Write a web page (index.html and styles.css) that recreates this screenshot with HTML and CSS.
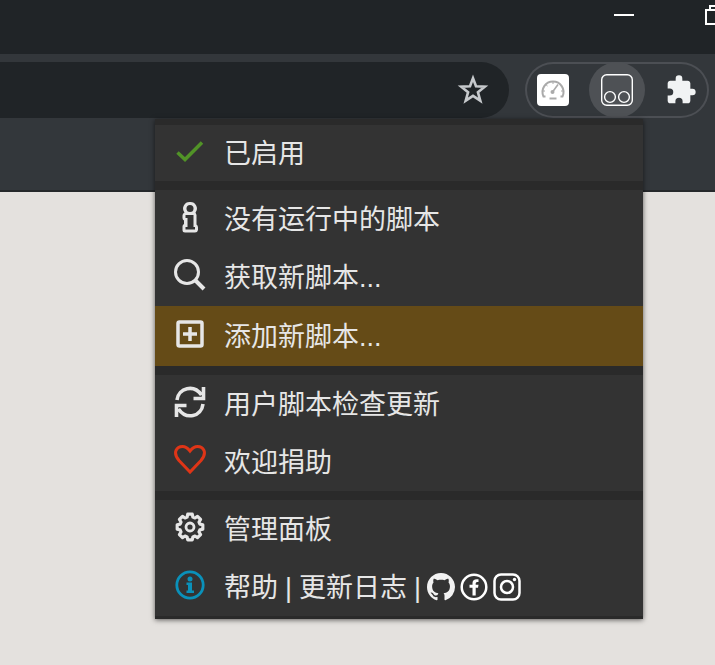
FILE: index.html
```html
<!DOCTYPE html>
<html lang="zh-CN">
<head>
<meta charset="utf-8">
<title>扩展菜单</title>
<link rel="stylesheet" href="styles.css">
</head>
<body>
<header class="browser">
  <div class="titlebar">
    <button class="window-button" aria-label="最小化"><svg width="20" height="20" viewBox="0 0 20 20"><path d="M0 10H20" stroke="#fff" stroke-width="2"/></svg></button>
    <button class="window-button" aria-label="还原"><svg width="20" height="20" viewBox="0 0 20 20" fill="none" stroke="#fff" stroke-width="2"><path d="M1 5H15V19H1ZM5 5V1H19V15H15"/></svg></button>
  </div>
  <div class="toolbar">
    <div class="address">
      <button class="tool" aria-label="收藏"><svg width="32" height="32" viewBox="0 0 32 32"><path d="M16 4.200L19 12.300L27.800 12.700L20.900 18.200L23.300 26.700L16 21.900L8.700 26.700L11.100 18.200L4.200 12.700L13 12.300Z" fill="none" stroke="#c6c9cc" stroke-width="2.600"/></svg></button>
    </div>
    <div class="extensions">
      <button class="tool" aria-label="测速"><svg width="32" height="32" viewBox="0 0 32 32"><rect width="32" height="32" rx="4" fill="#fff"/><g fill="none" stroke="#aaa" stroke-width="2"><path d="M8.500 22.500H6.500A10.500 10.500 0 1 1 25.500 22.500H23.500"/><path d="M16 7V10M8.800 10.500L10.500 12M6 17H8M24 17H26" stroke-width="1"/><path d="M15.500 18L21 10.500" stroke-width="1.600"/><path d="M12.500 24.500H19.500"/></g><circle cx="15.500" cy="18" r="2" fill="#aaa"/></svg></button>
      <button class="tool tool-active" aria-label="脚本管理器"><svg width="32" height="32" viewBox="0 0 32 32" fill="none" stroke="#fff" stroke-width="1.400"><rect x=".7" y=".7" width="30.600" height="30.600" rx="5"/><circle cx="9" cy="23" r="5.400"/><circle cx="23" cy="23" r="5.400"/></svg></button>
      <button class="tool" aria-label="扩展程序"><svg width="32" height="32" viewBox="0 0 24 24" fill="#f1f3f4"><path d="M20.500 11H19V7c0-1.100-.9-2-2-2h-4V3.500a2.500 2.500 0 0 0-5 0V5H4c-1.100 0-2 .9-2 2v3.800h1.500a2.700 2.700 0 0 1 0 5.400H2V20c0 1.100.9 2 2 2h3.800v-1.500a2.700 2.700 0 0 1 5.400 0V22H17c1.100 0 2-.9 2-2v-4h1.500a2.500 2.500 0 0 0 0-5z"/></svg></button>
    </div>
  </div>
  <div class="bookmarks"></div>
</header>
<nav class="popup" aria-label="脚本菜单">
  <section class="group group-short">
    <button class="item"><svg class="icon" viewBox="0 0 32 32"><path d="M3.500 17.500L11 24.500L28 7.500" fill="none" stroke="#519327" stroke-width="3.500"/></svg>已启用</button>
  </section>
  <section class="group">
    <button class="item"><svg class="icon" viewBox="0 0 32 32"><path d="M16 1A6.500 6.500 0 0 1 21.500 11.500L22.500 14V23.500Q24 24.500 24 26.500V29Q23.500 31.500 21 31.500H11Q8.500 31.500 8.500 29V25.500Q8.500 23.500 10 23V19.500Q8.500 18.500 8.500 17V14.500Q8.500 12.500 10.500 11.500A6.500 6.500 0 0 1 16 1Z" fill="#e6e6e6"/><g fill="#333"><circle cx="16" cy="7.500" r="3.500"/><path d="M11.500 14H19.500V26H21V28.500H11.500V26H13.500V17H11.500Z"/></g></svg>没有运行中的脚本</button>
    <button class="item"><svg class="icon" viewBox="0 0 32 32" fill="none" stroke="#e6e6e6"><circle cx="13" cy="13" r="11.500" stroke-width="3"/><path d="M21.500 21.500L30 30" stroke-width="4"/></svg>获取新脚本...</button>
    <button class="item item-active"><svg class="icon" viewBox="0 0 32 32" fill="none" stroke="#e6e6e6"><rect x="4" y="4" width="24" height="24" rx="1.500" stroke-width="3.500"/><path d="M9 16H23M16 9V23" stroke-width="3.500"/></svg>添加新脚本...</button>
  </section>
  <section class="group">
    <button class="item"><svg class="icon" viewBox="0 0 32 32" fill="none" stroke="#e6e6e6" stroke-width="3.600"><path d="M3 14C4.500 1.500 20-2 27.500 9M29.500 1V12.500H19.500M29 18C27.500 31 12 34 4.500 23M2.500 31V19.500H12.500"/></svg>用户脚本检查更新</button>
    <button class="item"><svg class="icon" viewBox="0 0 32 32"><path d="M16 28L5 16.500C-2 8 3 2.500 8.500 2.500C12 2.500 14 4.500 16 7C18 4.500 20 2.500 23.500 2.500C29 2.500 34 8 27 16.500Z" fill="none" stroke="#df3517" stroke-width="3"/></svg>欢迎捐助</button>
  </section>
  <section class="group">
    <button class="item"><svg class="icon" viewBox="0 0 32 32" fill="none" stroke="#e6e6e6" stroke-width="3.200" stroke-linejoin="round"><path d="M18.300 3.200L18.900 6.100L21 7L23.500 5.400L26.600 8.500L25 11L25.900 13.100L28.800 13.700V18.300L25.900 18.900L25 21L26.600 23.500L23.500 26.600L21 25L18.900 25.900L18.300 28.800H13.700L13.100 25.900L11 25L8.500 26.600L5.400 23.500L7 21L6.100 18.900L3.200 18.300V13.700L6.100 13.100L7 11L5.400 8.500L8.500 5.400L11 7L13.100 6.100L13.700 3.200Z"/><circle cx="16" cy="16" r="4" stroke-width="2.800"/></svg>管理面板</button>
    <div class="item">
      <svg class="icon" viewBox="0 0 32 32" fill="#0a91ba"><circle cx="16" cy="16" r="13.200" fill="none" stroke="#0a91ba" stroke-width="2.800"/><circle cx="16" cy="10" r="2.500"/><path d="M12.500 13.500H18V21.500H20V24H12.500V21.500H14V16H12.500Z"/></svg>
      <a class="link" href="#help">帮助</a><span class="bar">|</span><a class="link" href="#changes">更新日志</a><span class="bar">|</span>
      <span class="social">
        <a class="link" href="#github" aria-label="GitHub"><svg width="28" height="28" viewBox="0 0 16 16" fill="#f2f2f2"><path d="M8 0C3.580 0 0 3.580 0 8c0 3.540 2.290 6.530 5.470 7.590.4.070.550-.17.550-.38 0-.19-.01-.82-.01-1.490-2.010.370-2.530-.49-2.690-.94-.09-.23-.48-.94-.82-1.130-.28-.15-.68-.52-.01-.53.630-.01 1.080.580 1.230.820.720 1.210 1.870.87 2.330.660.070-.52.280-.87.510-1.070-1.780-.2-3.640-.89-3.640-3.950 0-.87.310-1.590.820-2.150-.08-.2-.36-1.020.080-2.120 0 0 .67-.21 2.200.82.640-.18 1.320-.27 2-.27s1.360.09 2 .27c1.530-1.040 2.200-.82 2.200-.82.440 1.100.160 1.920.080 2.120.510.560.820 1.270.820 2.150 0 3.070-1.870 3.750-3.650 3.950.290.250.540.730.540 1.480 0 1.070-.01 1.930-.01 2.200 0 .21.150.460.550.380A8.010 8.010 0 0 0 16 8c0-4.420-3.580-8-8-8z"/></svg></a>
        <a class="link" href="#facebook" aria-label="Facebook"><svg width="28" height="28" viewBox="0 0 28 28"><circle cx="14" cy="14" r="12.300" fill="none" stroke="#fff" stroke-width="2.500"/><path d="M12.500 22.500V14.800H9.500V11.800H12.500V10C12.500 7 14.500 5.800 18.500 6.300V9C16.300 8.900 15.700 9.300 15.700 10.700V11.800H18.500L18 14.800H15.700V22.500Z" fill="#fff"/></svg></a>
        <a class="link" href="#instagram" aria-label="Instagram"><svg width="28" height="28" viewBox="0 0 28 28" fill="none" stroke="#fff" stroke-width="2.500"><rect x="1.500" y="1.500" width="25" height="25" rx="6.500"/><circle cx="14" cy="14" r="6"/><circle cx="21.500" cy="6.500" r="1.700" fill="#fff" stroke="none"/></svg></a>
      </span>
    </div>
  </section>
</nav>
</body>
</html>
```
FILE: styles.css
```css
* {
  box-sizing: border-box;
}

body {
  margin: 0;
  min-height: 100vh;
  overflow: hidden;
  background: #e4e1de;
  color: #e6e6e6;
  font-family: "Liberation Sans", "Noto Sans CJK SC", sans-serif;
}

button {
  padding: 0;
  border: 0;
  background: none;
  color: inherit;
  font: inherit;
}

svg {
  display: block;
  flex: none;
}

.browser {
  background: #33373b;
}

.titlebar {
  display: flex;
  justify-content: flex-end;
  gap: 71px;
  height: 54px;
  margin-right: -10px;
  padding-top: 5px;
  background: #202427;
}

.window-button {
  display: flex;
  width: 20px;
  height: 20px;
}

.toolbar {
  display: flex;
  gap: 16px;
  height: 64px;
  padding: 8px 6px 0 0;
}

.address {
  display: flex;
  flex: 1;
  justify-content: flex-end;
  padding-right: 8px;
  border-radius: 0 28px 28px 0;
  background: #202427;
}

.extensions {
  display: flex;
  gap: 8px;
  width: 184px;
  border-radius: 28px;
  box-shadow: inset 0 0 0 2px #4c4f54;
}

.tool {
  display: flex;
  align-items: center;
  justify-content: center;
  width: 56px;
  height: 56px;
}

.tool-active {
  border-radius: 50%;
  background: #4e5155;
}

.bookmarks {
  height: 74px;
  border-bottom: 2px solid #25282b;
}

.popup {
  position: absolute;
  top: 119px;
  right: 72px;
  display: flex;
  flex-direction: column;
  gap: 9px;
  width: 488px;
  padding: 6px 0 3px;
  background: #2a2a2a;
  box-shadow: 0 1px 5px rgba(0, 0, 0, 0.6);
}

.group {
  background: #333;
}

.item {
  display: flex;
  align-items: center;
  width: 100%;
  height: 58px;
  padding: 2px 0 0 19px;
  font-size: 27px;
  line-height: 40px;
  text-align: left;
}

.group-short .item {
  height: 56px;
}

.item-active {
  height: 60px;
  background: #654b17;
}

.icon {
  width: 32px;
  height: 32px;
  margin: 0 18px 6px 0;
}

.link {
  color: inherit;
  text-decoration: none;
}

.bar {
  margin: 0 7px;
}

.social {
  display: flex;
  gap: 5px;
  margin: 0 0 2px -1px;
}
```
